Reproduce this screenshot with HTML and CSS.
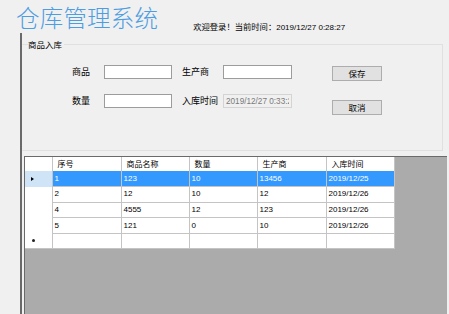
FILE: index.html
```html
<!DOCTYPE html>
<html lang="zh-CN">
<head>
  <meta charset="UTF-8">
  <title>仓库管理系统</title>
  <link rel="stylesheet" href="styles.css">
</head>
<body>

<div class="header">
  <h1 class="title">仓库管理系统</h1>
  <div class="welcome">欢迎登录！当前时间：<span class="num">2019/12/27 0:28:27</span></div>
</div>

<div class="main">
  <fieldset class="groupbox">
    <legend>商品入库</legend>
    <div class="form">
      <label class="lbl">商品</label>
      <div class="field"><input type="text" class="txt"></div>
      <label class="lbl">生产商</label>
      <div class="field"><input type="text" class="txt wide"></div>
      <button class="btn save">保存</button>

      <label class="lbl">数量</label>
      <div class="field"><input type="text" class="txt"></div>
      <label class="lbl">入库时间</label>
      <div class="field"><input type="text" class="txt wide date" value="2019/12/27 0:33:27" disabled></div>
      <button class="btn cancel">取消</button>
    </div>
  </fieldset>

  <div class="grid">
    <table>
      <colgroup>
        <col style="width:27px">
        <col style="width:69px">
        <col style="width:68px">
        <col style="width:68px">
        <col style="width:69px">
        <col style="width:68px">
      </colgroup>
      <thead>
        <tr>
          <th class="rh"></th>
          <th>序号</th>
          <th>商品名称</th>
          <th>数量</th>
          <th>生产商</th>
          <th>入库时间</th>
        </tr>
      </thead>
      <tbody id="stockList"></tbody>
    </table>
  </div>
</div>

<script>
  const stock = [
    { id: 1, name: "123", qty: 10, maker: "13456", date: "2019/12/25" },
    { id: 2, name: "12", qty: 10, maker: "12", date: "2019/12/26" },
    { id: 4, name: "4555", qty: 12, maker: "123", date: "2019/12/26" },
    { id: 5, name: "121", qty: 0, maker: "10", date: "2019/12/26" }
  ];

  const list = document.getElementById("stockList");

  stock.forEach((s, index) => {
    const row = document.createElement("tr");
    if (index === 0) row.className = "selected";
    row.innerHTML = `
      <td class="rh">${index === 0 ? '<span class="arrow"></span>' : ''}</td>
      <td>${s.id}</td>
      <td>${s.name}</td>
      <td>${s.qty}</td>
      <td>${s.maker}</td>
      <td>${s.date}</td>
    `;
    list.appendChild(row);
  });

  // empty row for new entry
  const newRow = document.createElement("tr");
  newRow.className = "new-row";
  newRow.innerHTML = `<td class="rh"><span class="star"></span></td><td></td><td></td><td></td><td></td><td></td>`;
  list.appendChild(newRow);
</script>

</body>
</html>
```

FILE: styles.css
```css
:root {
  --bg: #f0f0f0;
  --title: #4d9de2;
  --line: #e0e0e0;
  --dark-line: #6a6a6a;
  --grid-line: #c4c4c4;
  --grid-bg: #ababab;
  --select: #3399ff;
  --select-head: #cfe4f7;
}

* {
  box-sizing: border-box;
}

html, body {
  height: 100%;
}

body {
  margin: 0;
  background: var(--bg);
  font-family: "Noto Sans CJK SC", sans-serif;
  color: #000;
  overflow: hidden;
  display: flex;
  flex-direction: column;
}

.num {
  font-family: "Liberation Sans", sans-serif;
}

/* Header */
.header {
  height: 33px;
  display: flex;
  align-items: flex-start;
  padding-left: 16px;
  flex-shrink: 0;
}

.title {
  margin: 5px 0 0 0;
  font-size: 23.5px;
  line-height: 24px;
  font-weight: 300;
  color: var(--title);
  letter-spacing: 0.2px;
  white-space: nowrap;
}

.welcome {
  margin: 21px 0 0 35px;
  font-size: 8.3px;
  line-height: 10px;
  white-space: nowrap;
}

.welcome .num {
  font-size: 8px;
}

/* Main panel */
.main {
  flex: 1;
  margin-left: 20px;
  border-left: 2px solid var(--dark-line);
  display: flex;
  flex-direction: column;
  min-height: 0;
}

.groupbox {
  margin: 6px 6px 0 0;
  padding: 0;
  height: 112px;
  border: 1px solid var(--line);
  border-left-color: transparent;
  min-width: 0;
}

.groupbox legend {
  margin-left: 5px;
  padding: 0 2px 0 0;
  font-size: 8.5px;
  line-height: 11px;
}

.form {
  display: grid;
  grid-template-columns: 32px 78px 41px 109px 50px;
  grid-template-rows: 15px 21px;
  row-gap: 14px;
  margin: 15px 0 0 49px;
}

.lbl {
  font-size: 9px;
  line-height: 14px;
  align-self: start;
  white-space: nowrap;
}

.field {
  align-self: start;
}

.txt {
  display: block;
  width: 68px;
  height: 14px;
  margin: 0;
  padding: 0 2px;
  border: 1px solid #9c9c9c;
  background: #fff;
  font-family: "Liberation Sans", sans-serif;
  font-size: 8px;
  outline: none;
}

.txt.wide {
  width: 69px;
}

.txt.date {
  border-color: #d4d4d4;
  background: var(--bg);
  color: #7a7a7a;
  padding: 0 2px;
  font-size: 8.2px;
}

.btn {
  width: 50px;
  height: 15px;
  padding: 0;
  border: 1px solid #adadad;
  background: #e1e1e1;
  font-family: "Noto Sans CJK SC", sans-serif;
  font-size: 8.5px;
  line-height: 13px;
  color: #000;
}

.btn.save {
  align-self: start;
  margin-top: 1px;
}

.btn.cancel {
  align-self: end;
}

/* Data grid */
.grid {
  flex: 1;
  margin: 5px 2px 0 2px;
  border-top: 1px solid var(--dark-line);
  border-left: 1px solid var(--dark-line);
  background: var(--grid-bg);
  overflow: hidden;
}

table {
  border-collapse: collapse;
  table-layout: fixed;
  width: 369px;
  background: #fff;
}

th, td {
  padding: 0 0 0 2px;
  border-right: 1px solid var(--grid-line);
  border-bottom: 1px solid var(--grid-line);
  text-align: left;
  white-space: nowrap;
  overflow: hidden;
}

th {
  height: 14px;
  padding-left: 5px;
  font-weight: normal;
  font-size: 8px;
  line-height: 12px;
  border-bottom: none;
}

td {
  height: 15.6px;
  font-family: "Liberation Sans", sans-serif;
  font-size: 8px;
  line-height: 10px;
}

.rh {
  padding: 0;
  border-bottom: none;
}

.selected td {
  background: var(--select);
  color: #fff;
}

.selected td.rh {
  background: var(--select-head);
}

.new-row td {
  border-bottom: 1px solid var(--grid-line);
}

.arrow {
  display: block;
  width: 0;
  height: 0;
  margin-left: 6px;
  border-top: 2.5px solid transparent;
  border-bottom: 2.5px solid transparent;
  border-left: 3px solid #000;
}

.star {
  display: block;
  width: 3px;
  height: 3px;
  margin-left: 7px;
  border-radius: 50%;
  background: #222;
}
```
